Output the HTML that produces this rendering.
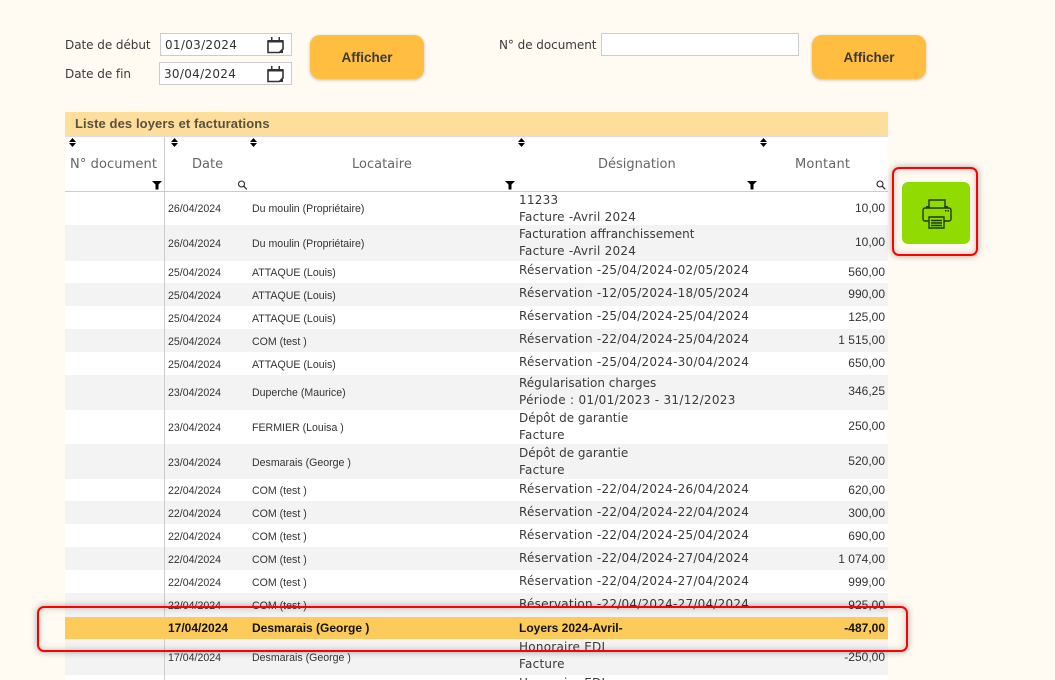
<!DOCTYPE html>
<html lang="fr"><head><meta charset="utf-8"><title>Liste des loyers</title>
<style>
html,body{margin:0;padding:0}
body{width:1055px;height:680px;overflow:hidden;background:#fffbf3;position:relative;font-family:"Liberation Sans",sans-serif;color:#333}
.a{position:absolute;white-space:nowrap}
.lb{font:12px/16px "DejaVu Sans",sans-serif;color:#3a3a3a;letter-spacing:-.05px}
.in{position:absolute;background:#fff;border:1px solid #ccc;box-sizing:border-box;font:12px/22px "DejaVu Sans",sans-serif;color:#333;padding-left:4px;letter-spacing:.3px}
.btn{position:absolute;width:114px;height:44px;top:35px;background:#ffbe40;border-radius:10px;box-shadow:0 1px 3px rgba(0,0,0,.25);font:bold 13.5px/45px "Liberation Sans",sans-serif;color:#3d3a36;text-align:center}
.r{position:absolute;left:65px;width:823px}
.g{background:#f3f3f3}.w{background:#fff}
.d,.l,.m,.s{position:absolute;white-space:nowrap}
.d{left:103px;font-size:10.6px;color:#333;margin-top:1px}
.l{left:187px;font-size:10.6px;color:#333;margin-top:1px}
.s{left:454px;font:12px/17px "DejaVu Sans",sans-serif;color:#3a3a3a;letter-spacing:.24px}
.s i{font-style:normal;letter-spacing:0}
.m{right:3px;font-size:12px;color:#333;text-align:right;margin-top:-1px}
.h{position:absolute;top:157px;font:13px/16px "DejaVu Sans",sans-serif;color:#666;font-weight:normal}
.bd .d,.bd .l,.bd .m,.bd .s{font-weight:bold;color:#111;margin-top:0}
.bd .d,.bd .l{font-size:12px}
.bd .s{font:bold 12px/17px "Liberation Sans",sans-serif;letter-spacing:0}
.red{position:absolute;border:2px solid #f00;border-radius:7px;box-sizing:border-box;box-shadow:0 0 7px rgba(0,0,0,.35),inset 0 0 7px rgba(0,0,0,.22)}
svg{position:absolute;display:block}
</style></head><body>

<div class="a lb" style="left:65px;top:37px">Date de début</div>
<div class="in" style="left:160px;top:33px;width:132px;height:23px">01/03/2024</div>
<svg style="left:266px;top:36px" width="19" height="18" viewBox="0 0 19 18"><path d="M2 5h15v8l-3.500 3.500H2z" fill="none" stroke="#333" stroke-width="1.600"/><path d="M2 4h15v2.500H2zM5 1h1.500v3.500H5zM12.500 1H14v3.500h-1.500z" fill="#333"/><path d="M17 12v5h-5z" fill="#333"/></svg>
<div class="a lb" style="left:65px;top:66px">Date de fin</div>
<div class="in" style="left:159px;top:62px;width:133px;height:23px">30/04/2024</div>
<svg style="left:266px;top:65px" width="19" height="18" viewBox="0 0 19 18"><path d="M2 5h15v8l-3.500 3.500H2z" fill="none" stroke="#333" stroke-width="1.600"/><path d="M2 4h15v2.500H2zM5 1h1.500v3.500H5zM12.500 1H14v3.500h-1.500z" fill="#333"/><path d="M17 12v5h-5z" fill="#333"/></svg>
<div class="btn" style="left:310px">Afficher</div>

<div class="a lb" style="left:499px;top:37px">N° de document</div>
<div class="in" style="left:601px;top:33px;width:198px;height:23px"></div>
<div class="btn" style="left:812px">Afficher</div>

<div class="a" style="left:65px;top:112px;width:823px;height:24px;background:#fddf9b;border-bottom:1px solid #ddd;box-sizing:content-box"></div>
<div class="a" style="left:75px;top:116px;font:bold 13px/16px 'Liberation Sans',sans-serif;color:#5a5040;letter-spacing:.1px">Liste des loyers et facturations</div>

<div class="a" style="left:65px;top:137px;width:823px;height:54px;background:#fff;border-bottom:1px solid #ccc"></div>
<div class="h" style="left:70px;letter-spacing:.1px">N° document</div>
<div class="h" style="left:192px">Date</div>
<div class="h" style="left:352px">Locataire</div>
<div class="h" style="left:598px">Désignation</div>
<div class="h" style="left:795px;letter-spacing:.2px">Montant</div>

<svg style="left:0;top:0" width="1055" height="200">
<g fill="#000">
<path d="M69 142l3.500-4 3.500 4zM69 143h7l-3.500 4z"/>
<path d="M171 142l3.500-4 3.500 4zM171 143h7l-3.500 4z"/>
<path d="M250 142l3.500-4 3.500 4zM250 143h7l-3.500 4z"/>
<path d="M518 142l3.500-4 3.500 4zM518 143h7l-3.500 4z"/>
<path d="M760 142l3.500-4 3.500 4zM760 143h7l-3.500 4z"/>
<path d="M152 181h10l-3.500 3.500v5h-3v-5z"/>
<path d="M505 181h10l-3.500 3.500v5h-3v-5z"/>
<path d="M747 181h10l-3.500 3.500v5h-3v-5z"/>
</g>
<g fill="none" stroke="#222" stroke-width="1.100"><circle cx="241.500" cy="184" r="3"/><path d="M243.800 186.300l3 3"/><circle cx="880" cy="184" r="3"/><path d="M882.300 186.300l3 3"/></g>
</svg>

<div class="r w" style="top:192px;height:33px"><span class="d" style="top:10px">26/04/2024</span><span class="l" style="top:10px">Du moulin (Propriétaire)</span><span class="s" style="top:0">11233<br>Facture -Avril 2024</span><span class="m" style="top:10px">10,00</span></div>
<div class="r g" style="top:225px;height:36px"><span class="d" style="top:12px">26/04/2024</span><span class="l" style="top:12px">Du moulin (Propriétaire)</span><span class="s" style="top:1px"><i>Facturation affranchissement</i><br>Facture -Avril 2024</span><span class="m" style="top:11px">10,00</span></div>
<div class="r w" style="top:261px;height:22px"><span class="d" style="top:5px">25/04/2024</span><span class="l" style="top:5px">ATTAQUE (Louis)</span><span class="s" style="top:1px">Réservation -25/04/2024-02/05/2024</span><span class="m" style="top:5px">560,00</span></div>
<div class="r g" style="top:283px;height:23px"><span class="d" style="top:6px">25/04/2024</span><span class="l" style="top:6px">ATTAQUE (Louis)</span><span class="s" style="top:2px">Réservation -12/05/2024-18/05/2024</span><span class="m" style="top:5px">990,00</span></div>
<div class="r w" style="top:306px;height:23px"><span class="d" style="top:6px">25/04/2024</span><span class="l" style="top:6px">ATTAQUE (Louis)</span><span class="s" style="top:2px">Réservation -25/04/2024-25/04/2024</span><span class="m" style="top:5px">125,00</span></div>
<div class="r g" style="top:329px;height:23px"><span class="d" style="top:6px">25/04/2024</span><span class="l" style="top:6px">COM (test )</span><span class="s" style="top:2px">Réservation -22/04/2024-25/04/2024</span><span class="m" style="top:5px">1 515,00</span></div>
<div class="r w" style="top:352px;height:23px"><span class="d" style="top:6px">25/04/2024</span><span class="l" style="top:6px">ATTAQUE (Louis)</span><span class="s" style="top:2px">Réservation -25/04/2024-30/04/2024</span><span class="m" style="top:5px">650,00</span></div>
<div class="r g" style="top:375px;height:35px"><span class="d" style="top:11px">23/04/2024</span><span class="l" style="top:11px">Duperche (Maurice)</span><span class="s" style="top:0"><i>Régularisation charges</i><br><span style="letter-spacing:.3px">Période : 01/01/2023 - 31/12/2023</span></span><span class="m" style="top:10px">346,25</span></div>
<div class="r w" style="top:410px;height:34px"><span class="d" style="top:11px">23/04/2024</span><span class="l" style="top:11px">FERMIER (Louisa )</span><span class="s" style="top:0"><i>Dépôt de garantie</i><br>Facture</span><span class="m" style="top:10px">250,00</span></div>
<div class="r g" style="top:444px;height:35px"><span class="d" style="top:12px">23/04/2024</span><span class="l" style="top:12px">Desmarais (George )</span><span class="s" style="top:1px"><i>Dépôt de garantie</i><br>Facture</span><span class="m" style="top:11px">520,00</span></div>
<div class="r w" style="top:479px;height:22px"><span class="d" style="top:5px">22/04/2024</span><span class="l" style="top:5px">COM (test )</span><span class="s" style="top:2px">Réservation -22/04/2024-26/04/2024</span><span class="m" style="top:5px">620,00</span></div>
<div class="r g" style="top:501px;height:23px"><span class="d" style="top:6px">22/04/2024</span><span class="l" style="top:6px">COM (test )</span><span class="s" style="top:3px">Réservation -22/04/2024-22/04/2024</span><span class="m" style="top:6px">300,00</span></div>
<div class="r w" style="top:524px;height:23px"><span class="d" style="top:6px">22/04/2024</span><span class="l" style="top:6px">COM (test )</span><span class="s" style="top:3px">Réservation -22/04/2024-25/04/2024</span><span class="m" style="top:6px">690,00</span></div>
<div class="r g" style="top:547px;height:23px"><span class="d" style="top:6px">22/04/2024</span><span class="l" style="top:6px">COM (test )</span><span class="s" style="top:3px">Réservation -22/04/2024-27/04/2024</span><span class="m" style="top:6px">1 074,00</span></div>
<div class="r w" style="top:570px;height:23px"><span class="d" style="top:6px">22/04/2024</span><span class="l" style="top:6px">COM (test )</span><span class="s" style="top:3px">Réservation -22/04/2024-27/04/2024</span><span class="m" style="top:6px">999,00</span></div>
<div class="r g" style="top:593px;height:24px"><span class="d" style="top:6px">22/04/2024</span><span class="l" style="top:6px">COM (test )</span><span class="s" style="top:3px">Réservation -22/04/2024-27/04/2024</span><span class="m" style="top:6px">925,00</span></div>
<div class="r bd" style="top:617px;height:22px;background:#fdcb5c"><span class="d" style="top:4px">17/04/2024</span><span class="l" style="top:4px">Desmarais (George )</span><span class="s" style="top:3px">Loyers 2024-Avril-</span><span class="m" style="top:4px">-487,00</span></div>
<div class="r g" style="top:639px;height:36px"><span class="d" style="top:12px">17/04/2024</span><span class="l" style="top:12px">Desmarais (George )</span><span class="s" style="top:0">Honoraire EDL<br>Facture</span><span class="m" style="top:12px">-250,00</span></div>
<div class="r w" style="top:675px;height:5px;overflow:hidden"><span class="s" style="top:0">Honoraire EDL</span></div>

<div class="a" style="left:164px;top:137px;width:1px;height:480px;background:#ccc"></div>
<div class="a" style="left:164px;top:639px;width:1px;height:41px;background:#ccc"></div>

<div class="a" style="left:902px;top:182px;width:68px;height:62px;background:#92db00;border-radius:6px"></div>
<svg style="left:918px;top:196px" width="38" height="36" viewBox="0 0 38 36"><g fill="none" stroke="#1d3a00" stroke-width="1.400"><path d="M11 12V4h16v8"/><path d="M11 25H7a2 2 0 0 1-2-2V14a2 2 0 0 1 2-2h24a2 2 0 0 1 2 2v9a2 2 0 0 1-2 2h-5"/><path d="M11 21h15v11H11z"/><path d="M13 24.500h11M13 27h11M13 29.500h11"/></g><path d="M8 10h3v2H8zM27 10h3v2h-3zM27 14h1.500v1.500H27zM29.500 14H31v1.500h-1.500z" fill="#1d3a00"/></svg>

<div class="red" style="left:892px;top:167px;width:86px;height:89px"></div>
<div class="red" style="left:37px;top:606px;width:871px;height:46px"></div>
</body></html>
